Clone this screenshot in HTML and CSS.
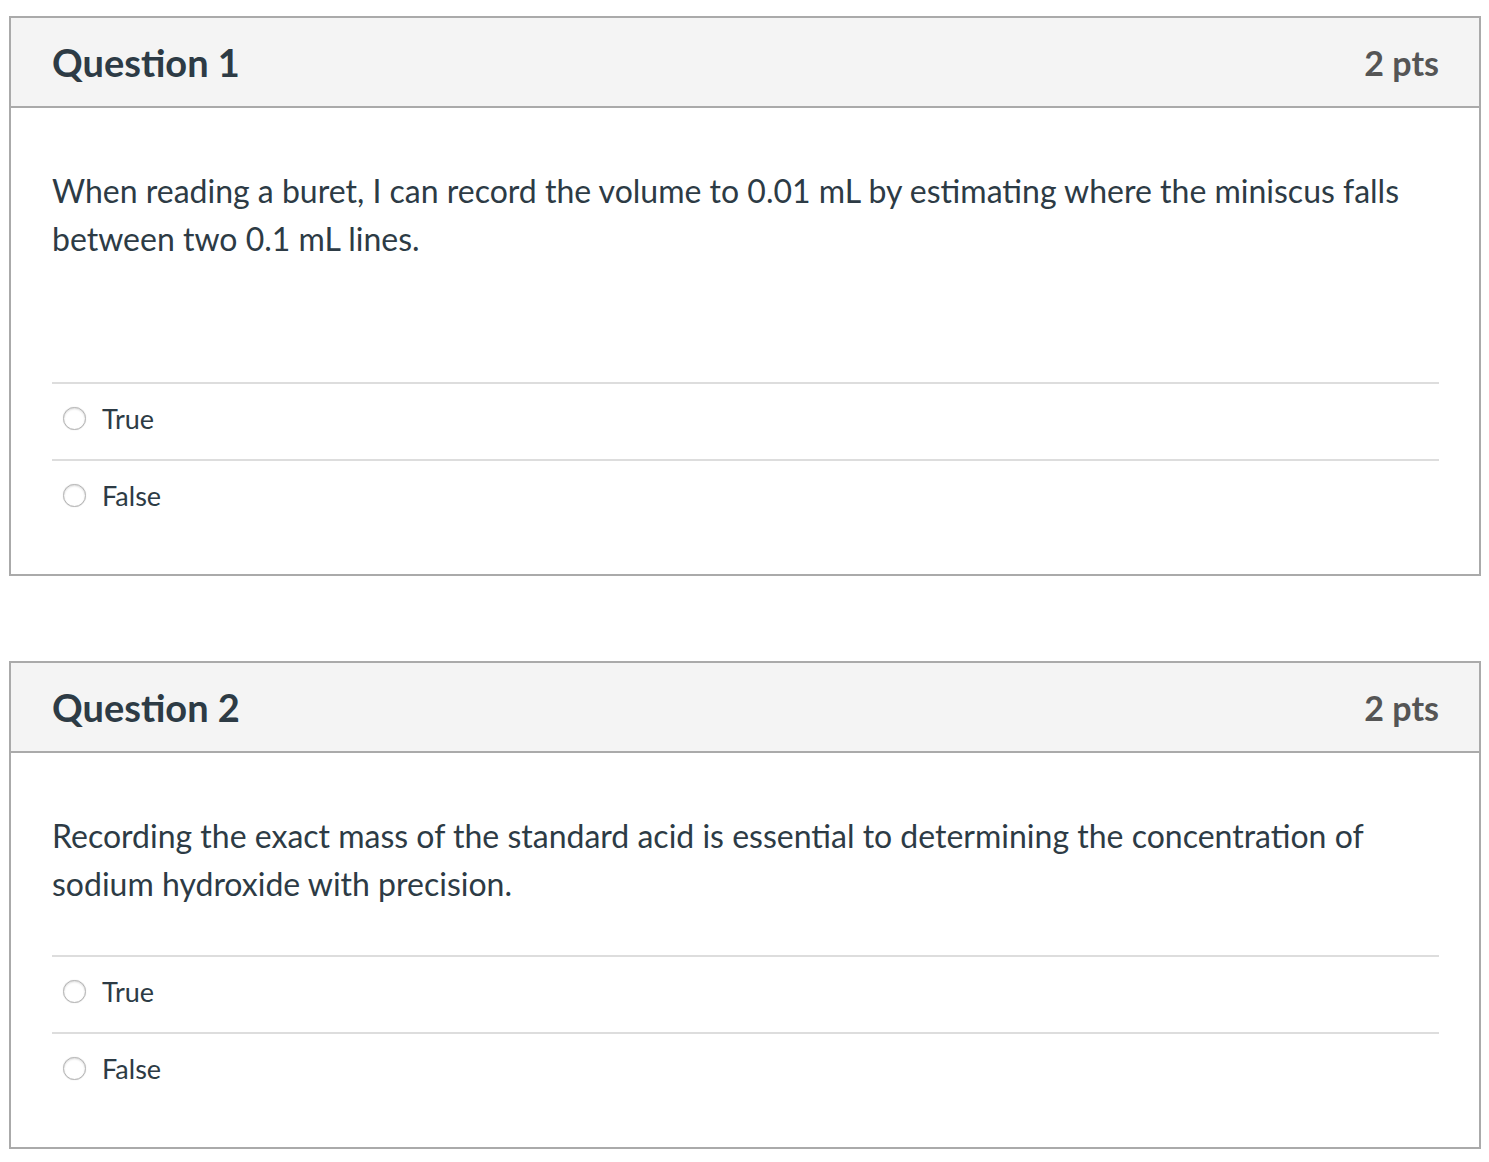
FILE: index.html
```html
<!DOCTYPE html>
<html>
<head>
<meta charset="utf-8">
<link rel="stylesheet" href="styles.css">
</head>
<body>
<div class="quiz">
  <div class="question">
    <div class="q-header">
      <h2 class="q-title">Question 1</h2>
      <span class="q-points">2 pts</span>
    </div>
    <div class="q-body">
      <div class="q-text q-text--tall">When reading a buret, I can record the volume to 0.01 mL by estimating where the miniscus falls between two 0.1 mL lines.</div>
      <div class="answers">
        <label class="answer"><span class="radio"></span><span class="answer-label">True</span></label>
        <label class="answer"><span class="radio"></span><span class="answer-label">False</span></label>
      </div>
    </div>
  </div>
  <div class="question">
    <div class="q-header">
      <h2 class="q-title">Question 2</h2>
      <span class="q-points">2 pts</span>
    </div>
    <div class="q-body">
      <div class="q-text">Recording the exact mass of the standard acid is essential to determining the concentration of sodium hydroxide with precision.</div>
      <div class="answers">
        <label class="answer"><span class="radio"></span><span class="answer-label">True</span></label>
        <label class="answer"><span class="radio"></span><span class="answer-label">False</span></label>
      </div>
    </div>
  </div>
</div>
</body>
</html>
```
FILE: styles.css
```css
* { box-sizing: border-box; }
html, body { margin: 0; padding: 0; background: #fff; }
body {
  font-family: Lato, "Open Sans", sans-serif;
  color: #2d3b45;
}
.quiz {
  padding: 16px 8px 0 9px;
  display: flex;
  flex-direction: column;
  gap: 85px;
}
.question {
  border: 2px solid #aaaaaa;
  width: 1472px;
}
.q-header {
  background: #f4f4f4;
  border-bottom: 2px solid #aaaaaa;
  height: 90px;
  display: flex;
  align-items: center;
  justify-content: space-between;
  padding: 0 40px 0 41px;
}
.q-title {
  margin: 0;
  font-size: 38px;
  font-weight: 700;
  color: #2d3b45;
}
.q-points {
  font-size: 34px;
  font-weight: 700;
  color: #555555;
}
.q-body {
  padding: 59px 40px 38px 41px;
}
.q-text {
  font-size: 32px;
  line-height: 48px;
  padding-bottom: 47px;
}
.q-text--tall {
  padding-bottom: 119px;
}
.answers {
  display: flex;
  flex-direction: column;
}
.answer {
  display: flex;
  align-items: center;
  height: 77px;
  border-top: 2px solid #dddddd;
  padding-left: 11px;
  padding-bottom: 7px;
  gap: 16px;
}
.radio {
  width: 23px;
  height: 23px;
  border-radius: 50%;
  border: 1px solid #b5b5b5;
  background: #fff;
  box-shadow: inset 0 1px 2px rgba(0,0,0,0.14), 0 0 1px rgba(0,0,0,0.2);
  flex: none;
}
.answer-label {
  font-size: 27px;
  color: #2d3b45;
}
```
